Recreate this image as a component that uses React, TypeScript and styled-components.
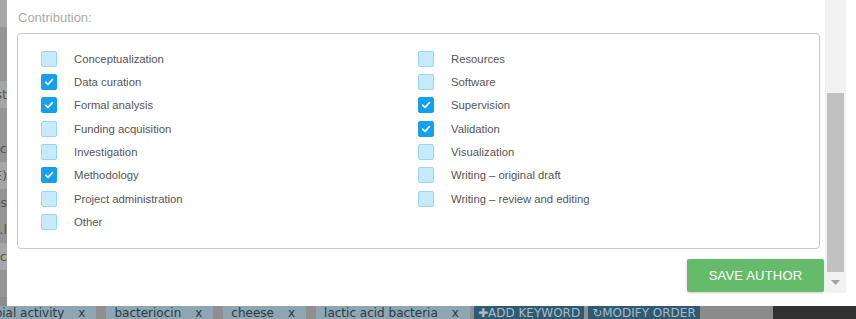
import React, { FC } from 'react';
import styled, { createGlobalStyle } from 'styled-components';

const GlobalStyle = createGlobalStyle`
  html, body {
    margin: 0;
    padding: 0;
    width: 856px;
    height: 319px;
    overflow: hidden;
    background: #8c8c8c;
  }
  * { box-sizing: border-box; }
`;

const roles = [
  { label: 'Conceptualization', checked: false },
  { label: 'Resources', checked: false },
  { label: 'Data curation', checked: true },
  { label: 'Software', checked: false },
  { label: 'Formal analysis', checked: true },
  { label: 'Supervision', checked: true },
  { label: 'Funding acquisition', checked: false },
  { label: 'Validation', checked: true },
  { label: 'Investigation', checked: false },
  { label: 'Visualization', checked: false },
  { label: 'Methodology', checked: true },
  { label: 'Writing – original draft', checked: false },
  { label: 'Project administration', checked: false },
  { label: 'Writing – review and editing', checked: false },
  { label: 'Other', checked: false },
];

const keywords = ['antimicrobial activity', 'bacteriocin', 'cheese', 'lactic acid bacteria'];
const sideLines = ['', '', '', 'st', '', 'oc', '(E', 's,', 'l.', 'oc', ''];

const Check: FC = () => (
  <svg width="10" height="10" viewBox="0 0 10 10">
    <path d="M1.6 5.2 L4 7.4 L8.4 2.6" fill="none" stroke="#fff" strokeWidth="1.6" strokeLinecap="round" strokeLinejoin="round" />
  </svg>
);

const ArrowDown: FC = () => (
  <svg width="9" height="5" viewBox="0 0 9 5">
    <path d="M0 0 H9 L4.5 5 Z" fill="#a3a3a3" />
  </svg>
);

export default function App() {
  return (
    <>
      <GlobalStyle />
      <Page>
        <SideColumn>
          {sideLines.map((t, i) => (
            <SideLine key={i} $shade={i % 3 === 0}>
              {t}
            </SideLine>
          ))}
        </SideColumn>
        <KeywordBar>
          {keywords.map((k, i) => (
            <Chip key={k} $first={i === 0}>
              {k}
              <ChipX>x</ChipX>
            </Chip>
          ))}
          <BarButton>✚ADD KEYWORD</BarButton>
          <BarButton>↻MODIFY ORDER</BarButton>
          <BarFiller />
          <DarkBlock />
        </KeywordBar>
      </Page>

      <Modal>
        <ModalBody>
          <FieldLabel>Contribution:</FieldLabel>
          <RoleBox>
            {roles.map((r) => (
              <RoleRow key={r.label}>
                <Box $checked={r.checked}>{r.checked && <Check />}</Box>
                <RoleText>{r.label}</RoleText>
              </RoleRow>
            ))}
          </RoleBox>
          <Actions>
            <SaveButton>SAVE AUTHOR</SaveButton>
          </Actions>
        </ModalBody>
        <ScrollTrack>
          <ScrollSpace />
          <ScrollThumb />
          <ScrollArrow>
            <ArrowDown />
          </ScrollArrow>
        </ScrollTrack>
      </Modal>
    </>
  );
}

const Page = styled.div`
  width: 856px;
  height: 319px;
  display: flex;
  flex-direction: column;
  justify-content: space-between;
  font-family: 'DejaVu Sans', Verdana, sans-serif;
`;

const SideColumn = styled.div`
  width: 7px;
  display: flex;
  flex-direction: column;
  overflow: hidden;
  background: #9a9a9a;
`;

const SideLine = styled.div<{ $shade: boolean }>`
  height: 27px;
  line-height: 27px;
  font-size: 13px;
  color: #555;
  white-space: nowrap;
  direction: rtl;
  background: ${(p) => (p.$shade ? '#a6a6a6' : '#959595')};
`;

const KeywordBar = styled.div`
  height: 13px;
  display: flex;
  align-items: stretch;
  overflow: hidden;
  background: #8f8f8f;
`;

const Chip = styled.div<{ $first: boolean }>`
  display: flex;
  align-items: center;
  gap: 14px;
  padding: 2px 11px 0 8px;
  margin-left: ${(p) => (p.$first ? '-70px' : '10px')};
  background: #8ea6b2;
  color: #2f3a40;
  font-size: 12px;
  white-space: nowrap;
  line-height: 13px;
`;

const ChipX = styled.span`
  font-size: 12px;
`;

const BarButton = styled.div`
  display: flex;
  align-items: center;
  margin-left: 4px;
  padding: 2px 4px 0;
  background: #2e5a72;
  color: #a9bcc7;
  font-size: 12px;
  white-space: nowrap;
  line-height: 13px;
  &:first-of-type {
    margin-left: 13px;
  }
`;

const BarFiller = styled.div`
  flex: 1;
  background: #8c8c8c;
`;

const DarkBlock = styled.div`
  width: 83px;
  background: #323232;
`;

const Modal = styled.div`
  position: fixed;
  top: 0;
  left: 7px;
  right: 0;
  height: 306px;
  background: #fff;
  display: flex;
  font-family: 'Liberation Sans', Arial, sans-serif;
`;

const ModalBody = styled.div`
  width: 818px;
  padding: 10px 0 0 10px;
  display: flex;
  flex-direction: column;
`;

const FieldLabel = styled.div`
  font-size: 13px;
  line-height: 16px;
  color: #aaaaaa;
  padding-left: 1px;
`;

const RoleBox = styled.div`
  margin-top: 7px;
  width: 803px;
  height: 216px;
  border: 1px solid #c9c9c9;
  border-radius: 4px;
  padding: 13px 0 0 23px;
  display: grid;
  grid-template-columns: 377px 1fr;
  grid-auto-rows: 23.33px;
`;

const RoleRow = styled.div`
  display: flex;
  align-items: center;
`;

const Box = styled.span<{ $checked: boolean }>`
  width: 16px;
  height: 16px;
  border-radius: 2px;
  display: flex;
  align-items: center;
  justify-content: center;
  background: ${(p) => (p.$checked ? '#12a0ef' : '#c8ebfc')};
  border: 1px solid ${(p) => (p.$checked ? '#12a0ef' : '#95d6f8')};
`;

const RoleText = styled.span`
  margin-left: 17px;
  font-size: 11.3px;
  color: #555;
`;

const Actions = styled.div`
  display: flex;
  justify-content: flex-end;
  margin-top: 10px;
  padding-right: 1px;
`;

const SaveButton = styled.button`
  width: 137px;
  height: 33px;
  border: none;
  border-radius: 2px;
  background: #66bb6a;
  color: #fff;
  font-family: 'Liberation Sans', Arial, sans-serif;
  font-size: 13px;
  letter-spacing: 0.2px;
  box-shadow: 0 1px 3px rgba(0, 0, 0, 0.2);
`;

const ScrollTrack = styled.div`
  width: 21px;
  height: 293px;
  background: #f1f1f1;
  display: flex;
  flex-direction: column;
  align-items: center;
`;

const ScrollSpace = styled.div`
  height: 93px;
`;

const ScrollThumb = styled.div`
  width: 17px;
  height: 179px;
  background: #c1c1c1;
`;

const ScrollArrow = styled.div`
  flex: 1;
  display: flex;
  align-items: center;
  justify-content: center;
`;
